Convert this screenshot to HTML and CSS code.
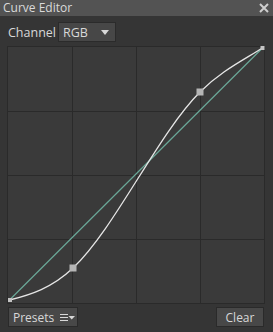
FILE: index.html
```html
<!DOCTYPE html>
<html>
<head>
    <title>Curve Editor</title>
    <meta charset="utf-8" />
    <link rel="stylesheet" href="styles.css">
</head>
<body>
    <div class="panel">
        <div class="titlebar">
            <span class="title">Curve Editor</span>
            <svg class="close" width="10" height="10" viewBox="0 0 10 10">
                <path d="M1 1 L9 9 M9 1 L1 9" stroke="#cfcfcf" stroke-width="2" />
            </svg>
        </div>
        <div class="channel-row">
            <span class="label">Channel</span>
            <div class="select">
                <span>RGB</span>
                <svg width="8" height="5" viewBox="0 0 8 5"><path d="M0 0 H8 L4 5 Z" fill="#d8d8d8" /></svg>
            </div>
        </div>
        <!-- graph: 256x256, curve drawn as hermite segments through the control points -->
        <div class="graph">
            <svg width="256" height="256" viewBox="0 0 256 256">
                <g stroke="#2a2a2a" stroke-width="1">
                    <path d="M64.5 0 V256 M128.5 0 V256 M192.5 0 V256" />
                    <path d="M0 64.5 H256 M0 128.5 H256 M0 192.5 H256" />
                </g>
                <path d="M1.5 253 L254.5 1" stroke="#6aa898" stroke-width="1.2" fill="none" />
                <path d="M1.5 253 C22.7 247.7 43.8 241.1 65 221 C107.3 180.8 149.7 87.3 192 45 C212.8 24.2 233.7 14.1 254.5 1"
                      stroke="#e6e6e6" stroke-width="1.3" fill="none" />
                <rect x="61.5" y="217.5" width="7" height="7" fill="#b5b5b5" />
                <rect x="188.5" y="41.5" width="7" height="7" fill="#b5b5b5" />
                <rect x="0" y="251" width="4" height="4" fill="#c4c4c4" />
                <rect x="252.5" y="-1" width="4" height="4" fill="#c4c4c4" />
            </svg>
        </div>
        <div class="footer">
            <button class="btn presets">
                <span>Presets</span>
                <svg class="menu-icon" width="15" height="9" viewBox="0 0 15 9">
                    <path d="M0 1.5 H8 M0 4.5 H8 M0 7.5 H8" stroke="#d8d8d8" stroke-width="1" />
                    <path d="M8.5 3 H15 L11.75 6.5 Z" fill="#d8d8d8" />
                </svg>
            </button>
            <button class="btn clear">Clear</button>
        </div>
    </div>
</body>
</html>
```

FILE: styles.css
```css
body {
    margin: 0;
    background-color: #353535;
    font-family: "Open Sans", "Noto Sans", sans-serif;
    font-size: 12px;
    color: #d8d8d8;
}
div.panel {
    width: 273px;
    height: 332px;
    background-color: #353535;
}
div.titlebar {
    height: 16px;
    background-color: #535353;
    display: flex;
    align-items: center;
    justify-content: space-between;
    padding: 0 4px 0 3px;
}
    div.titlebar .title {
        color: #dadada;
        font-size: 12px;
        line-height: 16px;
    }
div.channel-row {
    display: flex;
    align-items: center;
    margin-top: 6px;
    padding-left: 8px;
    height: 20px;
}
    div.channel-row .label {
        font-size: 12.5px;
        width: 50px;
    }
div.select {
    box-sizing: border-box;
    width: 58px;
    height: 20px;
    background-color: #474747;
    border: 1px solid #2b2b2b;
    display: flex;
    align-items: center;
    justify-content: space-between;
    padding: 0 6px 0 4px;
    font-size: 12.5px;
}
div.graph {
    margin: 5px 0 0 8px;
    width: 256px;
    height: 256px;
    background-color: #3a3a3a;
    box-shadow: 0 0 0 1px #2a2a2a;
}
    div.graph svg {
        display: block;
        overflow: visible;
    }
div.footer {
    display: flex;
    justify-content: space-between;
    margin-top: 4px;
    padding: 0 9px 0 8px;
}
button.btn {
    box-sizing: border-box;
    height: 20px;
    background-color: #484848;
    border: 1px solid #2a2a2a;
    color: #d8d8d8;
    font-family: "Open Sans", "Noto Sans", sans-serif;
    font-size: 12px;
    padding: 0 4px;
    display: flex;
    align-items: center;
}
    button.presets {
        width: 70px;
        gap: 6px;
    }
    button.clear {
        width: 48px;
        justify-content: center;
    }
.menu-icon {
    flex-shrink: 0;
}
```
